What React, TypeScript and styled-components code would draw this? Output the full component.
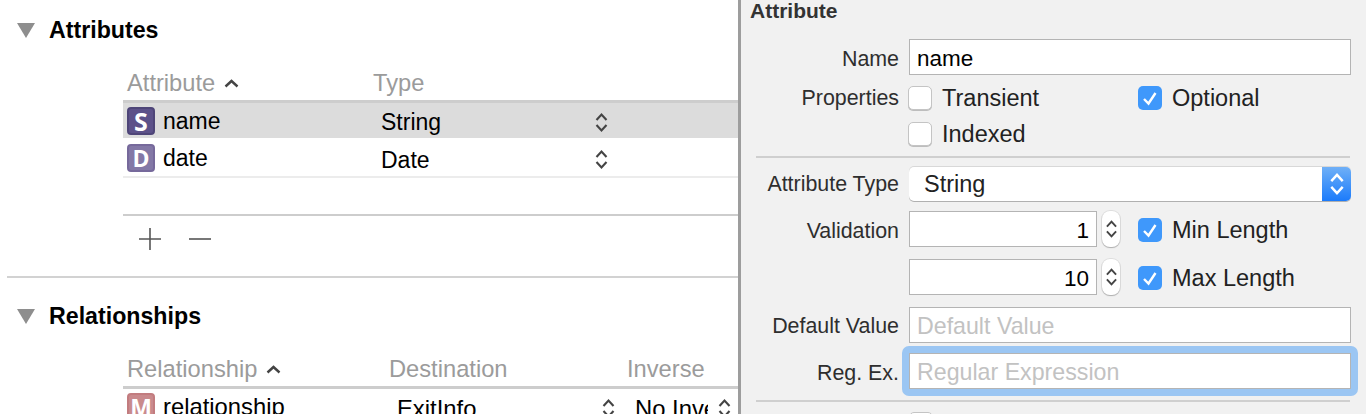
import React from "react";
import styled, { createGlobalStyle } from "styled-components";

const Global = createGlobalStyle`
  html, body { margin: 0; padding: 0; background: #fff; }
  body { font-family: "Liberation Sans", Arial, sans-serif; }
`;

const Page = styled.div`
  width: 1366px; height: 414px; overflow: hidden; display: flex; background: #fff; color: #222;
  font-size: 22px; line-height: 26px;
`;
const Left = styled.div`
  width: 738px; flex: none; height: 414px; overflow: hidden; display: flex; flex-direction: column;
`;
const Section = styled.section<{ $height: number; $top: number; $divider?: boolean }>`
  flex: none; height: ${(p) => p.$height}px; padding-top: ${(p) => p.$top}px; box-sizing: border-box;
  margin-left: 7px;
  border-bottom: ${(p) => (p.$divider ? "2px solid #d2d2d2" : "none")};
`;
const Heading = styled.div`
  display: flex; align-items: center; height: 26px; padding-left: 10px; gap: 14px;
  font-weight: 700; font-size: 23.2px; color: #000;
`;
const Table = styled.div<{ $top: number }>`
  margin: ${(p) => p.$top}px 0 0 116px;
`;
const HeaderRow = styled.div`
  height: 26px; display: flex; align-items: center; color: #9b9b9b; font-size: 23.7px;
  border-bottom: 3px solid #cdcdcd; padding-bottom: 4px;
`;
const HeaderCell = styled.div<{ $width: number; $pad?: number }>`
  width: ${(p) => p.$width}px; flex: none; padding-left: ${(p) => p.$pad ?? 0}px; box-sizing: border-box;
  display: flex; align-items: center; gap: 9px; white-space: nowrap;
`;
const Row = styled.div<{ $selected?: boolean; $size?: number }>`
  height: ${(p) => (p.$selected ? 35 : 36)}px; display: flex; align-items: center; color: #000;
  font-size: ${(p) => p.$size ?? 23}px;
  background: ${(p) => (p.$selected ? "#dcdcdc" : "#fff")};
`;
const RowGap = styled.div<{ $color: string }>`
  height: 2px; background: ${(p) => p.$color};
`;
const EntityBadge = styled.span<{ $bg: string; $edge: string; $size: number }>`
  flex: none; width: 28px; height: 28px; margin: 0 8px 0 4px; box-sizing: border-box; border-radius: 4px;
  background: ${(p) => p.$bg}; border: 2px solid ${(p) => p.$edge};
  display: flex; align-items: center; justify-content: center;
  font-family: "Open Sans", sans-serif; font-weight: 700; font-size: ${(p) => p.$size}px; line-height: 24px;
  color: #fff;
`;
const NameCell = styled.div<{ $width: number }>`
  width: ${(p) => p.$width}px; flex: none; display: flex; align-items: center;
`;
const ValueCell = styled.div<{ $width: number; $pad: number }>`
  width: ${(p) => p.$width}px; flex: none; box-sizing: border-box; padding-left: ${(p) => p.$pad}px;
  display: flex; align-items: center; justify-content: space-between; overflow: hidden; white-space: nowrap;
  padding-top: 3px;
`;
const Clip = styled.span<{ $width: number }>`
  display: block; width: ${(p) => p.$width}px; overflow: hidden; flex: none;
`;
const Blank = styled.div`height: 36px;`;
const Tools = styled.div`
  border-top: 2px solid #cdcdcd; height: 46px; display: flex; align-items: center; gap: 28px; padding-left: 16px;
`;

const Right = styled.div`
  flex: 1; height: 414px; overflow: hidden; box-sizing: border-box; background: #f1f1f1;
  border-left: 3px solid #9d9d9d; padding: 0 15px 0 9px;
`;
const PanelTitle = styled.div`
  height: 39px; font-weight: 700; font-size: 21px; line-height: 22px; color: #333; box-sizing: border-box;
`;
const FormRow = styled.div<{ $height: number; $after?: number }>`
  display: flex; align-items: center; height: ${(p) => p.$height}px; margin-bottom: ${(p) => p.$after ?? 0}px;
`;
const Label = styled.div<{ $drop?: number }>`
  width: 149px; margin-right: 10px; flex: none; text-align: right; font-size: 21.4px; color: #2e2e2e; white-space: nowrap;
  padding-top: ${(p) => p.$drop ?? 0}px;
`;
const Field = styled.div<{ $width?: number; $align?: string; $placeholder?: boolean; $focus?: boolean }>`
  box-sizing: border-box; height: 100%; width: ${(p) => (p.$width ? `${p.$width}px` : "auto")}; flex: ${(p) => (p.$width ? "none" : 1)};
  background: #fff; border: 1px solid #b4b4b4; padding: ${(p) => (p.$placeholder ? 2 : 4)}px 7px 0; display: flex; align-items: center;
  justify-content: ${(p) => (p.$align === "right" ? "flex-end" : "flex-start")};
  color: ${(p) => (p.$placeholder ? "#c2c2c2" : "#000")};
  font-size: ${(p) => (p.$placeholder ? "23.2px" : "22.5px")};
  position: relative;
  &::after {
    content: ${(p) => (p.$focus ? '""' : "none")};
    position: absolute; inset: -8px; border: 7px solid #9bc6f3; border-radius: 7px; pointer-events: none;
  }
`;
const Check = styled.span<{ $on?: boolean }>`
  flex: none; box-sizing: border-box; width: 24px; height: 24px; border-radius: 5px;
  display: flex; align-items: center; justify-content: center;
  background: ${(p) => (p.$on ? "#3f98fb" : "#fff")};
  border: ${(p) => (p.$on ? "none" : "1px solid #c4c4c4")};
  box-shadow: ${(p) => (p.$on ? "none" : "0 1px 0 #bdbdbd")};
`;
const CheckGroup = styled.div<{ $width?: number; $offset?: number; $drop?: number }>`
  display: flex; align-items: center; gap: 10px; font-size: 23.5px; color: #222; white-space: nowrap;
  width: ${(p) => (p.$width ? `${p.$width}px` : "auto")}; flex: none;
  margin-left: ${(p) => p.$offset ?? 0}px;
  margin-top: ${(p) => p.$drop ?? 0}px;
`;
const Divider = styled.div<{ $top: number; $bottom: number }>`
  height: 2px; background: #cfcfcf; margin: ${(p) => p.$top}px 1px ${(p) => p.$bottom}px 6px;
`;
const Select = styled.div`
  flex: 1; height: 34px; box-sizing: border-box; background: #fff; border-radius: 5px; display: flex; align-items: center;
  padding-left: 15px; font-size: 23.5px; color: #222; box-shadow: 0 1px 0 #b0b0b0, 0 -1px 0 #d8d8d8; overflow: hidden;
  justify-content: space-between;
`;
const SelectArrows = styled.span`
  width: 29px; height: 100%; display: flex; align-items: center; justify-content: center;
  background: linear-gradient(#6fb0f7, #1b7bfb);
`;
const StepperBox = styled.span`
  flex: none; width: 18px; height: 36px; margin: 0 18px 0 5px; background: #fff; border-radius: 8px;
  box-shadow: 0 1px 1px #b0b0b0, 0 0 0 1px #dedede; display: flex; align-items: center; justify-content: center;
`;

const Triangle = () => (
  <svg width="18" height="15" viewBox="0 0 18 15"><path d="M0 0H18L9 15Z" fill="#8e8e8e" /></svg>
);
const SortUp = () => (
  <svg width="15" height="9" viewBox="0 0 15 9"><path d="M1.5 7.5L7.5 2L13.5 7.5" fill="none" stroke="#444" strokeWidth="2.4" /></svg>
);
const UpDown = ({ color = "#444", w = 13, h = 21 }: { color?: string; w?: number; h?: number }) => (
  <svg width={w} height={h} viewBox="0 0 12 21">
    <path d="M1 8L6 2.5L11 8M1 13L6 18.5L11 13" fill="none" stroke={color} strokeWidth="2.1" />
  </svg>
);
const Tick = () => (
  <svg width="16" height="15" viewBox="0 0 16 15"><path d="M2 8L6.5 12.5L13.5 2" fill="none" stroke="#fff" strokeWidth="2.4" /></svg>
);
const Plus = () => (
  <svg width="22" height="22" viewBox="0 0 22 22"><path d="M0 11H22M11 0V22" stroke="#555" strokeWidth="1.6" /></svg>
);
const Minus = () => (
  <svg width="22" height="22" viewBox="0 0 22 22"><path d="M0 11H22" stroke="#555" strokeWidth="1.6" /></svg>
);

export default function App() {
  return (
    <Page>
      <Global />
      <Left>
        <Section $height={278} $top={17} $divider>
          <Heading><Triangle />Attributes</Heading>
          <Table $top={27}>
            <HeaderRow>
              <HeaderCell $width={250} $pad={4}>Attribute <SortUp /></HeaderCell>
              <HeaderCell $width={300}>Type</HeaderCell>
            </HeaderRow>
            <Row $selected>
              <NameCell $width={250}><EntityBadge $bg="#5c5189" $edge="#4e4578" $size={25}>S</EntityBadge>name</NameCell>
              <ValueCell $width={235} $pad={8}>String <UpDown /></ValueCell>
            </Row>
            <RowGap $color="#fff" />
            <Row>
              <NameCell $width={250}><EntityBadge $bg="#8378a6" $edge="#76699b" $size={23}>D</EntityBadge>date</NameCell>
              <ValueCell $width={235} $pad={8}>Date <UpDown /></ValueCell>
            </Row>
            <RowGap $color="#ececec" />
            <Blank />
            <Tools><Plus /><Minus /></Tools>
          </Table>
        </Section>
        <Section $height={136} $top={25}>
          <Heading><Triangle />Relationships</Heading>
          <Table $top={27}>
            <HeaderRow>
              <HeaderCell $width={266} $pad={4}>Relationship <SortUp /></HeaderCell>
              <HeaderCell $width={238}>Destination</HeaderCell>
              <HeaderCell $width={100}>Inverse</HeaderCell>
            </HeaderRow>
            <Row $size={23.8}>
              <NameCell $width={274}><EntityBadge $bg="#c98a8d" $edge="#c27c7f" $size={23}>M</EntityBadge>relationship</NameCell>
              <ValueCell $width={218} $pad={0}>ExitInfo <UpDown /></ValueCell>
              <ValueCell $width={116} $pad={20}><Clip $width={73}>No Inverse</Clip><UpDown /></ValueCell>
            </Row>
          </Table>
        </Section>
      </Left>
      <Right>
        <PanelTitle>Attribute</PanelTitle>
        <FormRow $height={36} $after={11}>
          <Label $drop={4}>Name</Label>
          <Field>name</Field>
        </FormRow>
        <FormRow $height={24} $after={12}>
          <Label>Properties</Label>
          <CheckGroup $width={230} $offset={-1}><Check />Transient</CheckGroup>
          <CheckGroup><Check $on><Tick /></Check>Optional</CheckGroup>
        </FormRow>
        <FormRow $height={24}>
          <Label />
          <CheckGroup $offset={-1}><Check />Indexed</CheckGroup>
        </FormRow>
        <Divider $top={10} $bottom={9} />
        <FormRow $height={34} $after={10}>
          <Label>Attribute Type</Label>
          <Select>String<SelectArrows><UpDown color="#fff" w={14} h={24} /></SelectArrows></Select>
        </FormRow>
        <FormRow $height={36} $after={12}>
          <Label $drop={4}>Validation</Label>
          <Field $width={188} $align="right">1</Field>
          <StepperBox><UpDown w={11} h={22} /></StepperBox>
          <CheckGroup $drop={2}><Check $on><Tick /></Check>Min Length</CheckGroup>
        </FormRow>
        <FormRow $height={36} $after={12}>
          <Label />
          <Field $width={188} $align="right">10</Field>
          <StepperBox><UpDown w={11} h={22} /></StepperBox>
          <CheckGroup $drop={2}><Check $on><Tick /></Check>Max Length</CheckGroup>
        </FormRow>
        <FormRow $height={36} $after={10}>
          <Label $drop={2}>Default Value</Label>
          <Field $placeholder>Default Value</Field>
        </FormRow>
        <FormRow $height={36} $after={11}>
          <Label $drop={4}>Reg. Ex.</Label>
          <Field $placeholder $focus>Regular Expression</Field>
        </FormRow>
        <Divider $top={0} $bottom={10} />
        <FormRow $height={24}>
          <Label />
          <Check />
        </FormRow>
      </Right>
    </Page>
  );
}
